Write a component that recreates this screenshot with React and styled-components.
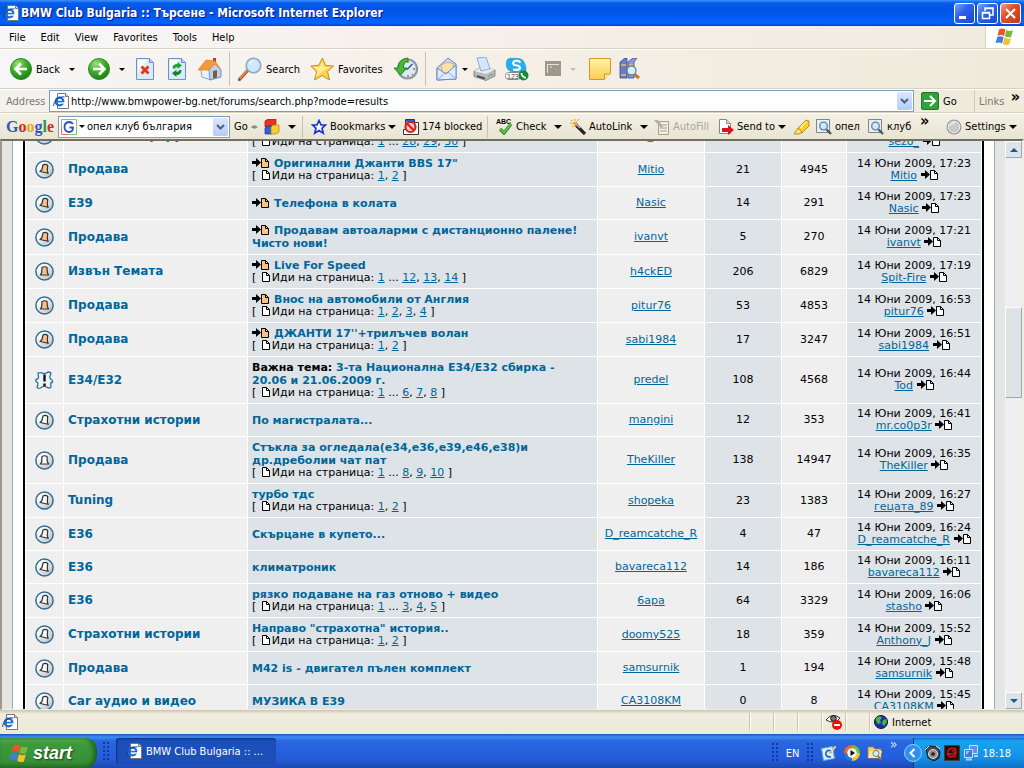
import React, { useLayoutEffect, useRef } from "react";
import styled, { createGlobalStyle } from "styled-components";

const topics = [
	{ icon: "new", forum: "Двигатели форум", title: "Нови снимки от събора", goto: true, pages: ["1", "28", "29", "30"], author: "sezo_bmw", replies: 442, views: 9120, date: "14 Юни 2009, 17:24", last: "sezo_" },
	{ icon: "new", forum: "Продава", title: 'Оригинални Джанти BBS 17"', goto: true, pages: ["1", "2"], author: "Mitio", replies: 21, views: 4945, date: "14 Юни 2009, 17:23", last: "Mitio" },
	{ icon: "new", forum: "E39", title: "Телефона в колата", goto: true, author: "Nasic", replies: 14, views: 291, date: "14 Юни 2009, 17:23", last: "Nasic" },
	{ icon: "new", forum: "Продава", title: "Продавам автоаларми с дистанционно палене! Чисто нови!", goto: true, author: "ivanvt", replies: 5, views: 270, date: "14 Юни 2009, 17:21", last: "ivanvt" },
	{ icon: "newHot", forum: "Извън Темата", title: "Live For Speed", goto: true, pages: ["1", "12", "13", "14"], author: "h4ckED", replies: 206, views: 6829, date: "14 Юни 2009, 17:19", last: "Spit-Fire" },
	{ icon: "newHot", forum: "Продава", title: "Внос на автомобили от Англия", goto: true, pages: ["1", "2", "3", "4"], author: "pitur76", replies: 53, views: 4853, date: "14 Юни 2009, 16:53", last: "pitur76" },
	{ icon: "new", forum: "Продава", title: "ДЖАНТИ 17''+трилъчев волан", goto: true, pages: ["1", "2"], author: "sabi1984", replies: 17, views: 3247, date: "14 Юни 2009, 16:51", last: "sabi1984" },
	{ icon: "sticky", forum: "E34/E32", sticky: true, title: "3-та Национална Е34/Е32 сбирка - 20.06 и 21.06.2009 г.", pages: ["1", "6", "7", "8"], author: "predel", replies: 108, views: 4568, date: "14 Юни 2009, 16:44", last: "Tod" },
	{ icon: "old", forum: "Страхотни истории", title: "По магистралата...", author: "mangini", replies: 12, views: 353, date: "14 Юни 2009, 16:41", last: "mr.co0p3r" },
	{ icon: "oldHot", forum: "Продава", title: "Стъкла за огледала(е34,е36,е39,е46,е38)и др.дреболии чат пат", pages: ["1", "8", "9", "10"], author: "TheKiller", replies: 138, views: 14947, date: "14 Юни 2009, 16:35", last: "TheKiller" },
	{ icon: "old", forum: "Tuning", title: "турбо тдс", pages: ["1", "2"], author: "shopeka", replies: 23, views: 1383, date: "14 Юни 2009, 16:27", last: "гецата_89" },
	{ icon: "old", forum: "E36", title: "Скърцане в купето...", author: "D_reamcatche_R", replies: 4, views: 47, date: "14 Юни 2009, 16:24", last: "D_reamcatche_R" },
	{ icon: "old", forum: "E36", title: "климатроник", author: "bavareca112", replies: 14, views: 186, date: "14 Юни 2009, 16:11", last: "bavareca112" },
	{ icon: "old", forum: "E36", title: "рязко подаване на газ отново + видео", pages: ["1", "3", "4", "5"], author: "6apa", replies: 64, views: 3329, date: "14 Юни 2009, 16:06", last: "stasho" },
	{ icon: "old", forum: "Страхотни истории", title: 'Направо "страхотна" история..', pages: ["1", "2"], author: "doomy525", replies: 18, views: 359, date: "14 Юни 2009, 15:52", last: "Anthony_J" },
	{ icon: "old", forum: "Продава", title: "М42 is - двигател пълен комплект", author: "samsurnik", replies: 1, views: 194, date: "14 Юни 2009, 15:48", last: "samsurnik" },
	{ icon: "old", forum: "Car аудио и видео", title: "МУЗИКА В Е39", author: "CA3108KM", replies: 0, views: 8, date: "14 Юни 2009, 15:45", last: "CA3108KM" },
];

/* ---------- icons ---------- */

const IeIcon = ({ size = 16 }) => (
	<svg width={size} height={size} viewBox="0 0 16 16">
		<path d="M4.5 .5h8l3 3v12h-11z" fill="#fff" stroke="#777" />
		<path d="M12.500 .5v3h3" fill="#ddd" stroke="#777" />
		<circle cx="6.500" cy="8.500" r="3.800" fill="none" stroke="#1c6fd0" strokeWidth="2.200" />
		<path d="M3.500 8.600h7" stroke="#1c6fd0" strokeWidth="1.600" />
		<path d="M8.500 10h3" stroke="#fff" strokeWidth="1.400" />
		<path d="M.8 13C-.5 9 7 2.500 11.500 4" fill="none" stroke="#123f8c" />
	</svg>
);

const Flag = ({ size = 20 }) => (
	<svg width={size} height={size} viewBox="0 0 20 20">
		<path d="M4 2.500q3-2 6.500 0L9 9Q6 7 2.500 8.800z" fill="#e8562a" />
		<path d="M11.300 3q3 1.800 6.700.3L16.200 9.700Q13 11 9.800 9.300z" fill="#7bb83a" />
		<path d="M2.200 10q3-1.800 6.500.2L7 16.500Q4 14.500.5 16.300z" fill="#3f7fdb" />
		<path d="M9.500 10.600q3 1.900 6.500.4L14.200 17.500Q11 19 7.800 17z" fill="#f6c12b" />
	</svg>
);

const RoundArrow = ({ flip }) => (
	<svg width="22" height="22" viewBox="0 0 22 22">
		<defs>
			<radialGradient id="grn" cx=".35" cy=".25" r=".8">
				<stop offset="0" stopColor="#9be07a" />
				<stop offset=".5" stopColor="#3fae2a" />
				<stop offset="1" stopColor="#1c7d14" />
			</radialGradient>
		</defs>
		<circle cx="11" cy="11" r="10.500" fill="url(#grn)" stroke="#2c8a22" />
		<path
			d={flip ? "M5 11h11M11 5.500l5.500 5.500-5.500 5.500" : "M17 11H6M11 5.500L5.500 11l5.500 5.500"}
			fill="none"
			stroke="#fff"
			strokeWidth="2.600"
		/>
	</svg>
);

const PageShape = () => (
	<>
		<path d="M.5.5h13l4 4v17H.5z" fill="#dcebfc" stroke="#6b92cf" />
		<path d="M2 2h9L2 14z" fill="#fff" />
		<path d="M13.500.5v4h4" fill="#b4d0f2" stroke="#6b92cf" />
	</>
);

const StopIcon = () => (
	<svg width="18" height="22" viewBox="0 0 18 22">
		<PageShape />
		<path d="M5.500 8.500l7 7M12.500 8.500l-7 7" stroke="#e63510" strokeWidth="2.800" />
	</svg>
);

const RefreshIcon = () => (
	<svg width="18" height="22" viewBox="0 0 18 22">
		<PageShape />
		<path d="M4.500 10q0-4 5-4v-2l4.500 3.500L9.500 11V9q-2.500 0-3 2z" fill="#23a03a" />
		<path d="M13.500 12q0 5-5 5v2L4 15.200l4.500-3.500v2.300q2.500 0 3-2z" fill="#158427" />
	</svg>
);

const HomeIcon = () => (
	<svg width="24" height="24" viewBox="0 0 24 24">
		<path d="M15 1h3v7h-3z" fill="#c33c20" />
		<path d="M3 13l7-8 3 8v10L4 20z" fill="#e9f1fc" stroke="#8aa4d0" />
		<path d="M11 13l6-7 6 7v7l-11 3z" fill="#bdd2f3" stroke="#6f8fc8" />
		<path d="M0 13L8 3l9 1 6 9-6-6-7 6z" fill="#f59a35" stroke="#d9822b" strokeWidth=".7" />
		<path d="M15 14l4-1v7.500l-4 1z" fill="#7c5a3c" />
	</svg>
);

const SearchIcon = () => (
	<svg width="24" height="24" viewBox="0 0 24 24">
		<path d="M1.500 22.500L10 13" stroke="#a5502a" strokeWidth="3.200" strokeLinecap="round" />
		<path d="M2 21.500L9 13.500" stroke="#e79a62" strokeWidth="1.200" />
		<circle cx="15.500" cy="8.500" r="7.300" fill="#cfe9fb" stroke="#8ea6cc" strokeWidth="1.600" />
		<path d="M10.500 8q1-4.500 5.500-4.500-3 1.500-5.500 4.500z" fill="#fff" />
	</svg>
);

const StarIcon = () => (
	<svg width="24" height="24" viewBox="0 0 24 24">
		<path d="M12.500 1l3 7.500 8 .5-6 5.500 2 8.500-7.500-4.500L4.500 23l2.200-8L.8 9l8-.8z" fill="#fcd545" stroke="#c98a1c" />
		<path d="M12.300 4l1.500 6H20l-7 4-7.500 6L8 14 3.500 10H9.500z" fill="#feec9a" />
	</svg>
);

const HistoryIcon = () => (
	<svg width="24" height="24" viewBox="0 0 24 24">
		<circle cx="13.500" cy="12" r="9.500" fill="#d8edf8" stroke="#8797a8" strokeWidth="2.200" />
		<path d="M13.500 12l5-5M14 12h-3" stroke="#2c5f93" strokeWidth="1.500" />
		<path d="M14 4v2M14 18v2M19 12h2M18 17l1 1" stroke="#d0502e" strokeWidth="1.400" />
		<path d="M14 1Q4 2 4 11H0l6.500 7 6.500-7H9.500Q9 6 14 4z" fill="#4cb53a" stroke="#25801c" />
	</svg>
);

const MailIcon = () => (
	<svg width="22" height="24" viewBox="0 0 22 24">
		<path d="M1 11L12 1l8 6v15L1 23z" fill="#c5dbf7" stroke="#6f87c8" />
		<path d="M5 9q5-6 13-2l-2 8-9 1z" fill="#fbe0a8" stroke="#d8a04c" strokeWidth=".8" />
		<path d="M1 11l9 6 10-9v14L1 23z" fill="#dcebfd" stroke="#6f87c8" />
		<path d="M1 23l8-7M20 22l-8-7" stroke="#8fa5da" />
	</svg>
);

const PrintIcon = () => (
	<svg width="24" height="24" viewBox="0 0 24 24">
		<path d="M1 14l8-4 13 3v6l-9 4.500-12-4z" fill="#b9b9bd" stroke="#77777c" strokeWidth=".8" />
		<path d="M1 14l8-4 13 2.500-9 4.500z" fill="#ececef" />
		<path d="M4 1l9-1 4 12-9 2z" fill="#d3e5fb" stroke="#7d9cd0" strokeWidth=".8" />
		<path d="M4 19l8 2.500" stroke="#3f3f45" strokeWidth="1.600" />
		<path d="M15 19.500l5-2.500" stroke="#6cb34a" strokeWidth="1.200" />
	</svg>
);

const SkypeIcon = () => (
	<svg width="24" height="24" viewBox="0 0 24 24">
		<path d="M1 6Q1 0 8 1q11-2 13 8 2 8-5 8L6 15Q0 12 1 6z" fill="#29aee8" />
		<path d="M15.500 5.500Q13 3 10 4T9 8q6 .5 6 3T8 12.500" fill="none" stroke="#fff" strokeWidth="2.200" />
		<rect x=".5" y="15.500" width="15" height="7" rx="3" fill="#fff" stroke="#888" />
		<text x="2" y="22" fontSize="7" fontFamily="Liberation Sans, sans-serif" fill="#444">123</text>
		<circle cx="18.500" cy="18.500" r="5" fill="#158a2e" />
		<path d="M16.500 16q0 4 4.500 4.800" fill="none" stroke="#fff" strokeWidth="1.800" />
	</svg>
);

const BlankAppIcon = () => (
	<svg width="16" height="16" viewBox="0 0 16 16">
		<path d="M0 0h16v16H0z" fill="#9c998c" />
		<path d="M2 3.500h12M2.500 3v9M6 5v2" stroke="#e9e5d6" />
		<path d="M0 15.500h16" stroke="#f8f6ee" />
	</svg>
);

const NoteIcon = () => (
	<svg width="22" height="22" viewBox="0 0 22 22">
		<defs>
			<linearGradient id="note" x2="0" y2="1">
				<stop offset="0" stopColor="#fff3a8" />
				<stop offset="1" stopColor="#fbcb55" />
			</linearGradient>
		</defs>
		<path d="M.5.5h21v15l-6 6H.5z" fill="url(#note)" stroke="#d09b22" />
		<path d="M15.500 21.500v-5.500h6" fill="#fde98f" stroke="#d09b22" />
	</svg>
);

const BooksIcon = () => (
	<svg width="22" height="22" viewBox="0 0 22 22">
		<path d="M1 4l5-4h2v20H1z" fill="#6c7bc8" stroke="#3c4a96" strokeWidth=".8" />
		<path d="M9 4l5-4h4l-3 4v16H9z" fill="#8a98de" stroke="#3c4a96" strokeWidth=".8" />
		<path d="M2 7h5M2 17h5M10 7h4" stroke="#e3c15e" strokeWidth="1.500" />
		<path d="M15 16l5 4" stroke="#bb7a30" strokeWidth="3" />
		<circle cx="12.500" cy="12.500" r="4.500" fill="#d3effb" stroke="#6a8499" strokeWidth="1.300" />
	</svg>
);

const GoIcon = () => (
	<svg width="18" height="18" viewBox="0 0 18 18">
		<rect x=".5" y=".5" width="17" height="17" rx="1.500" fill="#33a03b" stroke="#1e7a2a" />
		<path d="M3 9h11M9 4l5 5-5 5" fill="none" stroke="#fff" strokeWidth="2" />
	</svg>
);

const GIcon = () => (
	<svg width="16" height="16" viewBox="0 0 16 16">
		<path d="M.5 8V.5h15" fill="none" stroke="#8aa7f0" />
		<path d="M.5 8v7.500H8" fill="none" stroke="#e86a5c" />
		<path d="M15.500.5v7" fill="none" stroke="#7cc47e" />
		<path d="M15.500 8v7.500H8" fill="none" stroke="#7cc47e" />
		<path d="M12 5Q10.500 3 8 3 3.500 3.500 3.500 8T8 13q4 0 4-4.500H8.500" fill="none" stroke="#2b50c0" strokeWidth="1.800" />
	</svg>
);

const GadgetIcon = () => (
	<svg width="16" height="16" viewBox="0 0 16 16">
		<path d="M1 2l3-2h8v5l-3 3H1z" fill="#e8311f" stroke="#8e1a10" strokeWidth=".7" />
		<path d="M1 9l3-2h4v8H1z" fill="#2f62d8" stroke="#173a8e" strokeWidth=".7" />
		<path d="M7 8l2-2h6v7l-3 2H7z" fill="#f7cf2b" stroke="#a8830f" strokeWidth=".7" />
	</svg>
);

const BlueStar = () => (
	<svg width="16" height="16" viewBox="0 0 16 16">
		<path d="M8 1.500l2 4.500h4.500L11 9.200l1.300 5L8 11.500l-4.300 2.700 1.300-5L1.500 6H6z" fill="#fff" stroke="#1633e0" strokeWidth="1.700" />
	</svg>
);

const BlockedIcon = () => (
	<svg width="16" height="16" viewBox="0 0 16 16">
		<path d="M2.500.5h9v3h4v12h-15v-5h2z" fill="#fff" stroke="#333" />
		<path d="M3 1h8v2H3z" fill="#2f62d8" />
		<circle cx="7.500" cy="8" r="5" fill="#f6d0cc" stroke="#dc1f1a" strokeWidth="2.200" />
		<path d="M4 4.500l7 7" stroke="#dc1f1a" strokeWidth="2.200" />
	</svg>
);

const SpellIcon = () => (
	<svg width="17" height="16" viewBox="0 0 17 16">
		<text x="0" y="5" fontSize="7" fontWeight="bold" fontFamily="Liberation Sans, sans-serif">ABC</text>
		<path d="M4 10l4 4 7-9" fill="none" stroke="#2b8c22" strokeWidth="3.200" />
		<path d="M4 9.700l4 4 7-9" fill="none" stroke="#7fd45c" strokeWidth="1.200" />
	</svg>
);

const WandIcon = () => (
	<svg width="16" height="16" viewBox="0 0 16 16">
		<path d="M6 6l9 9" stroke="#222" strokeWidth="3.200" />
		<path d="M6 5l4 4" stroke="#bbb" strokeWidth="1.500" />
		<path d="M5 0v8M0 4.500h9M1 1l6 6M9 0L2 8" stroke="#e3a622" strokeWidth="1.100" strokeDasharray="2 1" />
	</svg>
);

const FillIcon = () => (
	<svg width="16" height="16" viewBox="0 0 16 16">
		<path d="M4.500 2.500h10v13h-10z" fill="#f1eee2" stroke="#a5a294" />
		<path d="M6 6h7M6 9h7M6 12h7" stroke="#a5a294" />
		<path d="M0 1h4l5 6-1 2-2-1z" fill="#b5b2a5" />
	</svg>
);

const SendIcon = () => (
	<svg width="16" height="16" viewBox="0 0 16 16">
		<path d="M1.500.5h7l4 4v10h-11z" fill="#fff" stroke="#888" />
		<path d="M8.500.5v4h4" fill="#ddd" stroke="#888" />
		<path d="M4 9h6V6l6 5-6 5v-3H4z" fill="#dd1320" />
	</svg>
);

const PenIcon = () => (
	<svg width="16" height="16" viewBox="0 0 16 16">
		<path d="M5 8l7-7 3 1v5l-7 7-5-1z" fill="#f9cf2c" stroke="#a97c10" strokeWidth=".8" />
		<path d="M4 9l4 4-3 2H0z" fill="#fbe56f" stroke="#a97c10" strokeWidth=".8" />
		<path d="M11 3l2-1-6 8-1-2z" fill="#fff3a0" />
	</svg>
);

const FindIcon = () => (
	<svg width="16" height="16" viewBox="0 0 16 16">
		<path d="M.5.500h13v13H.5z" fill="#e9eef4" stroke="#7b8794" />
		<path d="M10.500 10.500l4.500 4.500" stroke="#555" strokeWidth="2.400" />
		<circle cx="7.500" cy="7" r="3.800" fill="#cdeaf8" stroke="#5f7fa0" strokeWidth="1.300" />
	</svg>
);

const OrbIcon = () => (
	<svg width="16" height="16" viewBox="0 0 16 16">
		<circle cx="8" cy="8" r="7.500" fill="#9b9b9b" />
		<circle cx="8" cy="8" r="5.800" fill="#c9c9c9" stroke="#eee" />
		<path d="M4 7q1-3 5-3.500" fill="none" stroke="#fff" />
	</svg>
);

const EyeIcon = () => (
	<svg width="16" height="16" viewBox="0 0 16 16">
		<path d="M0 6Q6-2 14 4 9 11 0 6z" fill="#fff" stroke="#333" />
		<circle cx="7.500" cy="4.500" r="2.800" fill="#777" stroke="#111" />
		<circle cx="11" cy="11" r="5" fill="#ee1010" />
		<path d="M8 11h6" stroke="#fff" strokeWidth="2" />
	</svg>
);

const GlobeIcon = () => (
	<svg width="14" height="14" viewBox="0 0 14 14">
		<circle cx="7" cy="7" r="6.500" fill="#1b2fae" stroke="#0b1240" />
		<path d="M2 3l4-2 2 2-2 2 1 3-3 1-2-3zM9 5l3-1 1 3-3 4-2-2z" fill="#46b83e" />
	</svg>
);

const DeskIcon = () => (
	<svg width="16" height="16" viewBox="0 0 16 16">
		<path d="M.5 3.500l11-2 2 12-11 2z" fill="#d9eefb" stroke="#6ba6d6" />
		<path d="M10 6Q6 4 5 8t5 4M8 8l3-1" fill="none" stroke="#1e66c8" strokeWidth="1.700" />
		<path d="M14 1l1 1-6 7-2 1 1-2z" fill="#f2b74a" stroke="#fff" strokeWidth=".5" />
	</svg>
);

const MediaIcon = () => (
	<svg width="16" height="16" viewBox="0 0 16 16">
		<path d="M8 0a8 8 0 0 1 8 8h-8z" fill="#6cbf3a" />
		<path d="M16 8a8 8 0 0 1-8 8V8z" fill="#f3c128" />
		<path d="M8 16a8 8 0 0 1-8-8h8z" fill="#2c72d8" />
		<path d="M0 8a8 8 0 0 1 8-8v8z" fill="#ec6a24" />
		<circle cx="8" cy="8" r="4.800" fill="#f4f7fb" />
		<path d="M6.500 5l4.500 3-4.500 3z" fill="#111" />
	</svg>
);

const FolderIcon = () => (
	<svg width="16" height="16" viewBox="0 0 16 16">
		<path d="M1 2h5l2 2h6v9H1z" fill="#f6cf62" stroke="#b88420" strokeWidth=".7" />
		<path d="M3 6h12l-2 7H1z" fill="#fde89c" />
		<circle cx="9" cy="8.500" r="3" fill="#d4f0fa" stroke="#64809a" />
		<path d="M11 11l3 4" stroke="#a8692a" strokeWidth="1.800" />
	</svg>
);

const SpeakerIcon = () => (
	<svg width="16" height="16" viewBox="0 0 16 16">
		<path d="M1 3l4-2 7 1 3 5-1 6-5 3-6-3z" fill="#4a4a4c" stroke="#17171a" />
		<circle cx="8" cy="9" r="4.500" fill="#8f8f92" stroke="#ddd" />
		<circle cx="8" cy="9" r="1.800" fill="#1c1c1e" />
		<path d="M0 5l4-4M11 1l4 3" stroke="#e4e4e4" />
	</svg>
);

const RedBoxIcon = () => (
	<svg width="16" height="16" viewBox="0 0 16 16">
		<path d="M.5.500h15v15H.5z" fill="#20100f" stroke="#3c3c3c" />
		<path d="M12 4Q6 2 4 6t5 3l3-2-1 4-5 1M3 9l3 3M8 6l4-1" fill="none" stroke="#c41d18" strokeWidth="1.500" />
	</svg>
);

const NetIcon = () => (
	<svg width="16" height="16" viewBox="0 0 16 16">
		<path d="M6.500.5h8v8h-8z" fill="#5a92e4" stroke="#d4dce8" />
		<path d="M1.500 4.500h8v8h-8z" fill="#3c78d8" stroke="#d4dce8" />
		<path d="M3 14.500h6M11 11h4" stroke="#c4ccd8" strokeWidth="2" />
		<path d="M3 6h4l-4 4z" fill="#9cc4f6" />
	</svg>
);

const TopicIcon = ({ kind }) => {
	if (kind === "sticky") {
		return (
			<svg width="19" height="19" viewBox="0 0 19 19">
				<path
					d="M3 2q3-1 5 .5Q11 3 13 1q3 0 3 2-2 3-.5 5 2.500 1 2 3-2 .5-2 2.500 1.500 3-1 3.500-2 0-4-1.500-3-.5-5 1.500-3 1-3.500-1 1.500-3 .5-4.500Q0 10 1 8.500q2.500-.5 2.500-2T3 2z"
					fill="#eef3f7"
					stroke="#2b6f98"
					strokeWidth="1.300"
				/>
				<path d="M9.500 3.500v7M9.500 12.500v2.500" stroke="#111" strokeWidth="2.400" />
			</svg>
		);
	}
	const isNew = kind.startsWith("new");
	const hot = kind.endsWith("Hot");
	return (
		<svg width="19" height="19" viewBox="0 0 19 19">
			<defs>
				<linearGradient id="disc" x2="1" y2="1">
					<stop offset=".2" stopColor="#fff" />
					<stop offset="1" stopColor="#b4b8bc" />
				</linearGradient>
			</defs>
			<circle cx="9.500" cy="9.500" r="8.600" fill="url(#disc)" stroke="#2b6f98" strokeWidth="1.500" />
			<path
				d={hot ? "M7 5.500Q9.500 4 12 5.500l.3 5 1.200 2.500h-8l1.200-2.500z" : "M8 5q2.500-1.500 4.700.5l-.4 5 .7 2.800-7.800-1.800L7 9.500z"}
				fill={isNew ? "#fbc288" : "#fafafa"}
				stroke="#333"
				strokeWidth="1.200"
			/>
		</svg>
	);
};

const MiniPage = ({ arrow, color = "#fff" }) => (
	<MiniSvg width={arrow ? 17 : 8} height="10" viewBox={arrow ? "0 0 17 10" : "9 0 8 10"}>
		{arrow && <path d="M0 3h4V0l5 4.500L4 9V6H0z" fill="#000" />}
		<path d="M9.500.5h4l3 3v6h-7z" fill={color} stroke="#000" />
		<path d="M13.500.5v3h3" fill="none" stroke="#000" />
	</MiniSvg>
);

/* ---------- window ---------- */

const App = () => {
	const view = useRef(null);
	useLayoutEffect(() => {
		view.current.scrollTop = 23;
	}, []);

	return (
		<Desktop>
			<GlobalStyle />
			<TitleBar>
				<IeIcon />
				<WindowTitle>BMW Club Bulgaria :: Търсене - Microsoft Internet Explorer</WindowTitle>
				<WindowButton aria-label="Minimize">
					<svg width="19" height="19" viewBox="0 0 19 19"><path d="M4 13.500h7" stroke="#fff" strokeWidth="3" /></svg>
				</WindowButton>
				<WindowButton aria-label="Restore">
					<svg width="19" height="19" viewBox="0 0 19 19">
						<path d="M7 7V4h8v7h-3M7 4.500h8" fill="none" stroke="#fff" strokeWidth="1.500" />
						<path d="M4.500 8.500h7v6h-7zM4 9h8" fill="none" stroke="#fff" strokeWidth="1.500" />
					</svg>
				</WindowButton>
				<WindowButton $close aria-label="Close">
					<svg width="19" height="19" viewBox="0 0 19 19"><path d="M5 5l9 9M14 5l-9 9" stroke="#fff" strokeWidth="2.200" /></svg>
				</WindowButton>
			</TitleBar>

			<MenuBar>
				<MenuItem>File</MenuItem>
				<MenuItem>Edit</MenuItem>
				<MenuItem>View</MenuItem>
				<MenuItem>Favorites</MenuItem>
				<MenuItem>Tools</MenuItem>
				<MenuItem>Help</MenuItem>
				<Throbber><Flag /></Throbber>
			</MenuBar>

			<ToolBar>
				<ToolButton $w={78}><RoundArrow />Back<Caret $push /></ToolButton>
				<ToolButton $w={48} aria-label="Forward"><RoundArrow flip /><Caret $push /></ToolButton>
				<ToolButton $w={32} aria-label="Stop"><StopIcon /></ToolButton>
				<ToolButton $w={30} aria-label="Refresh"><RefreshIcon /></ToolButton>
				<ToolButton $w={31} aria-label="Home"><HomeIcon /></ToolButton>
				<Divider />
				<ToolButton $w={72}><SearchIcon />Search</ToolButton>
				<ToolButton $w={84}><StarIcon />Favorites</ToolButton>
				<ToolButton $w={31} aria-label="History"><HistoryIcon /></ToolButton>
				<Divider $wide />
				<ToolButton $w={37} aria-label="Mail"><MailIcon /><Caret /></ToolButton>
				<ToolButton $w={32} aria-label="Print"><PrintIcon /></ToolButton>
				<ToolButton $w={40} aria-label="Skype"><SkypeIcon /></ToolButton>
				<ToolButton $w={44} aria-label="Research"><BlankAppIcon /><Caret $push $dim /></ToolButton>
				<ToolButton $w={30} aria-label="Note"><NoteIcon /></ToolButton>
				<ToolButton $w={30} aria-label="Reference"><BooksIcon /></ToolButton>
			</ToolBar>

			<AddressBar>
				<BarLabel htmlFor="address">Address</BarLabel>
				<AddressBox>
					<IeIcon />
					<BoxInput id="address" defaultValue="http://www.bmwpower-bg.net/forums/search.php?mode=results" />
					<DropButton aria-label="Show addresses"><Chevron /></DropButton>
				</AddressBox>
				<GoButton><GoIcon />Go</GoButton>
				<LinksPart>Links<More>»</More></LinksPart>
			</AddressBar>

			<GoogleBar>
				<GoogleLogo href="#google">
					<i>G</i><i>o</i><i>o</i><i>g</i><i>l</i><i>e</i>
				</GoogleLogo>
				<QueryBox>
					<GIcon />
					<Caret />
					<BoxInput aria-label="Google search" defaultValue="опел клуб българия" />
					<DropButton aria-label="Recent searches"><Chevron /></DropButton>
				</QueryBox>
				<BarButton $w={34}>Go<Splitter>◂▸</Splitter></BarButton>
				<BarButton $w={38} aria-label="Gadgets"><GadgetIcon /><Caret $big $push /></BarButton>
				<Divider $short />
				<BarButton $w={92}><BlueStar />Bookmarks<Caret $big /></BarButton>
				<BarButton $w={84}><BlockedIcon />174 blocked</BarButton>
				<Divider $short />
				<BarButton $w={74}><SpellIcon />Check<Caret $big $push /></BarButton>
				<BarButton $w={84}><WandIcon />AutoLink<Caret $big $push /></BarButton>
				<BarButton $w={64} $dim><FillIcon />AutoFill</BarButton>
				<BarButton $w={76}><SendIcon />Send to<Caret $big /></BarButton>
				<BarButton $w={22} aria-label="Highlight"><PenIcon /></BarButton>
				<BarButton $w={52}><FindIcon />опел</BarButton>
				<BarButton $w={52}><FindIcon />клуб</BarButton>
				<More>»</More>
				<BarButton $w={74} $end><OrbIcon />Settings<Caret $big /></BarButton>
			</GoogleBar>

			<Viewport>
				<Page ref={view}>
					<Sheet>
						<TopicTable>
							<colgroup>
								<col width="37" />
								<col width="183" />
								<col />
								<col width="106" />
								<col width="76" />
								<col width="64" />
								<col width="134" />
							</colgroup>
							<tbody>
								{topics.map((t, i) => (
									<tr key={i}>
										<Cell $center><TopicIcon kind={t.icon} /></Cell>
										<Cell><ForumLink href="#forum">{t.forum}</ForumLink></Cell>
										<Cell $dark>
											<TopicTitle>
												{t.goto && <a href="#new" aria-label="Newest post"><MiniPage arrow color="#fbc288" /></a>}
												{t.sticky && "Важна тема: "}
												<a href="#topic">{t.title}</a>
											</TopicTitle>
											{t.pages && <Pages pages={t.pages} />}
										</Cell>
										<Cell $center><Author href="#user">{t.author}</Author></Cell>
										<Cell $center $dark><Small>{t.replies}</Small></Cell>
										<Cell $center><Small>{t.views}</Small></Cell>
										<Cell $center $dark>
											<Small>{t.date}</Small>
											<Small>
												<a href="#user">{t.last}</a> <MiniPage arrow />
											</Small>
										</Cell>
									</tr>
								))}
							</tbody>
						</TopicTable>
					</Sheet>
				</Page>
				<ScrollTrack>
					<ScrollButton aria-label="Scroll up"><Tri $up /></ScrollButton>
					<Above />
					<Thumb />
					<Below />
					<ScrollButton aria-label="Scroll down"><Tri /></ScrollButton>
				</ScrollTrack>
			</Viewport>

			<StatusBar>
				<StatusMain><IeIcon /></StatusMain>
				<StatusPart />
				<StatusPart />
				<StatusPart />
				<StatusPart><EyeIcon /></StatusPart>
				<StatusPart />
				<StatusPart $wide><GlobeIcon />Internet</StatusPart>
			</StatusBar>

			<TaskBar>
				<StartButton><Flag size={21} />start</StartButton>
				<Grip />
				<TaskButton><IeIcon />BMW Club Bulgaria :: ...</TaskButton>
				<Quick>
					<Grip />
					<Lang>EN</Lang>
					<Grip />
					<DeskIcon />
					<MediaIcon />
					<FolderIcon />
					<Overflow>»</Overflow>
				</Quick>
				<Tray>
					<TrayToggle aria-label="Hide icons">
						<svg width="18" height="18" viewBox="0 0 18 18">
							<circle cx="9" cy="9" r="8.500" fill="#2f8fee" stroke="#8fd0ff" />
							<path d="M10.500 5L6.500 9l4 4" fill="none" stroke="#fff" strokeWidth="2" />
						</svg>
					</TrayToggle>
					<SpeakerIcon />
					<RedBoxIcon />
					<NetIcon />
					<Clock>18:18</Clock>
				</Tray>
			</TaskBar>
		</Desktop>
	);
};

const Pages = ({ pages }) => (
	<PageLine>
		[ <MiniPage />Иди на страница:{" "}
		{pages.map((p, i) => {
			const skip = i === 1 && p !== "2";
			return (
				<React.Fragment key={p}>
					{i > 0 && (skip ? " ... " : ", ")}
					<a href="#page">{p}</a>
				</React.Fragment>
			);
		})}
		{" ]"}
	</PageLine>
);

const Chevron = () => (
	<svg width="9" height="6" viewBox="0 0 9 6"><path d="M1 1l3.500 3.500L8 1" fill="none" stroke="#4d6185" strokeWidth="2" /></svg>
);

export default App;

/* ---------- styles ---------- */

const GlobalStyle = createGlobalStyle`
	* { box-sizing: border-box; }
	body {
		margin: 0;
		font-family: "DejaVu Sans Condensed", "DejaVu Sans", sans-serif;
		font-size: 11px;
		color: #000;
	}
	button, input { font: inherit; color: inherit; }
	button { border: 0; background: none; padding: 0; white-space: nowrap; }
	svg { flex: none; }
`;

const Desktop = styled.div`
	height: 100vh;
	display: flex;
	flex-direction: column;
	overflow: hidden;
	background: #ece9d8;
`;

const TitleBar = styled.header`
	flex: none;
	height: 26px;
	display: flex;
	align-items: center;
	gap: 2px;
	padding: 0 3px;
	background: linear-gradient(#3a93ff 0, #0a5bea 3px, #0054e3 10px, #0060fb 20px, #0062ff 23px, #0044c4 26px);
`;

const WindowTitle = styled.h1`
	flex: 1;
	margin: 0;
	font-size: 12px;
	font-weight: bold;
	color: #fff;
	text-shadow: 1px 1px 1px #0f1089;
`;

const WindowButton = styled.button`
	width: 21px;
	height: 21px;
	border: 1px solid #fff;
	border-radius: 3px;
	background: ${(p) =>
		p.$close ? "linear-gradient(135deg, #f0a088, #e2502b 40%, #c23a14)" : "linear-gradient(135deg, #7fa4f5, #2f62ea 40%, #1b47d0)"};
	svg { display: block; }
`;

const MenuBar = styled.nav`
	flex: none;
	height: 23px;
	display: flex;
	align-items: center;
	gap: 15px;
	padding-left: 9px;
	background: linear-gradient(90deg, #f7f7f8, #f6efe9 50%, #efecdf);
	border-bottom: 1px solid #d8d2bd;
`;

const MenuItem = styled.button``;

const Throbber = styled.div`
	margin-left: auto;
	width: 39px;
	height: 22px;
	display: flex;
	align-items: center;
	justify-content: center;
	background: #fff;
	border-left: 1px solid #d8d2bd;
`;

const ToolBar = styled.div`
	flex: none;
	height: 40px;
	display: flex;
	align-items: center;
	padding-left: 10px;
	background: linear-gradient(90deg, #f7f6f6, #f5efe6 50%, #efebdb);
	border-top: 1px solid #fff;
	border-bottom: 1px solid #d8d2bd;
`;

const ToolButton = styled.button`
	flex: none;
	width: ${(p) => p.$w}px;
	display: flex;
	align-items: center;
	gap: 4px;
`;

const Caret = styled.span`
	flex: none;
	border: ${(p) => (p.$big ? 4 : 3)}px solid transparent;
	border-top-color: ${(p) => (p.$dim ? "#c4c0b0" : "#000")};
	border-bottom: 0;
	margin-left: ${(p) => (p.$push ? 5 : 0)}px;
`;

const Divider = styled.span`
	flex: none;
	width: 1px;
	height: ${(p) => (p.$short ? 22 : 34)}px;
	margin-right: ${(p) => (p.$wide ? 10 : 8)}px;
	background: #c9c3ab;
`;

const AddressBar = styled.div`
	flex: none;
	height: 24px;
	display: flex;
	align-items: center;
	padding-left: 6px;
	background: linear-gradient(90deg, #f4f2ee, #efebdb);
	border-top: 1px solid #fff;
	border-bottom: 1px solid #d8d2bd;
`;

const BarLabel = styled.label`
	width: 43px;
	color: #7a786c;
`;

const AddressBox = styled.div`
	flex: 1;
	min-width: 0;
	height: 22px;
	display: flex;
	align-items: center;
	gap: 2px;
	padding: 0 1px 0 3px;
	background: #fff;
	border: 1px solid #7f9db9;
`;

const BoxInput = styled.input`
	flex: 1;
	min-width: 0;
	padding: 0;
	border: 0;
	outline: 0;
	background: transparent;
`;

const DropButton = styled.button`
	flex: none;
	width: 15px;
	height: 18px;
	display: flex;
	align-items: center;
	justify-content: center;
	border-radius: 2px;
	background: linear-gradient(#dbe6fd, #b5cbf8);
`;

const GoButton = styled.button`
	width: 60px;
	display: flex;
	align-items: center;
	gap: 4px;
	padding-left: 7px;
`;

const LinksPart = styled.div`
	width: 50px;
	height: 22px;
	display: flex;
	align-items: center;
	justify-content: space-between;
	padding: 0 4px;
	border-left: 1px solid #d0cab4;
	color: #7a786c;
`;

const More = styled.span`
	align-self: flex-start;
	font-size: 16px;
	line-height: 14px;
	font-weight: bold;
	color: #000;
`;

const GoogleBar = styled.div`
	flex: none;
	height: 26px;
	display: flex;
	align-items: center;
	padding: 0 4px 0 6px;
	background: linear-gradient(#f3f0e5, #e9e5d3);
	border-top: 1px solid #fff;
`;

const GoogleLogo = styled.a`
	width: 52px;
	font-family: "Liberation Serif", serif;
	font-size: 16px;
	font-weight: bold;
	text-decoration: none;
	i { font-style: normal; color: #2a56c8; }
	i:nth-child(2), i:nth-child(6) { color: #d32b1e; }
	i:nth-child(3) { color: #e3a912; }
	i:nth-child(5) { color: #2c9a3b; }
`;

const QueryBox = styled(AddressBox)`
	flex: 0 0 172px;
	padding-left: 2px;
`;

const BarButton = styled.button`
	flex: none;
	width: ${(p) => p.$w}px;
	display: flex;
	align-items: center;
	gap: 3px;
	margin-left: ${(p) => (p.$end ? "auto" : 0)};
	color: ${(p) => (p.$dim ? "#aca899" : "#000")};
	&:nth-of-type(1) { padding-left: 4px; }
`;

const Splitter = styled.span`
	font-size: 8px;
	color: #8a8779;
`;

const Viewport = styled.main`
	flex: 1;
	min-height: 0;
	display: flex;
	border-top: 2px solid #716f64;
	border-left: 2px solid #9d9a8b;
	border-right: 2px solid #f1efe2;
	border-bottom: 1px solid #f1efe2;
	background: #e5e5e5;
`;

const Page = styled.div`
	flex: 1;
	min-width: 0;
	overflow: hidden;
	padding: 0 10px;
	font-family: "DejaVu Sans", Verdana, sans-serif;
	a { color: #006699; }
`;

const Sheet = styled.div`
	padding: 0 10px;
	background: #fff;
	border: 1px solid #98aab1;
	border-width: 0 1px;
`;

const TopicTable = styled.table`
	width: 100%;
	table-layout: fixed;
	border-collapse: separate;
	border-spacing: 1px;
	border: 2px solid #000;
	border-width: 0 2px;
`;

const Cell = styled.td`
	padding: 4px;
	background: ${(p) => (p.$dark ? "#dee3e7" : "#efefef")};
	text-align: ${(p) => (p.$center ? "center" : "left")};
	vertical-align: middle;
	line-height: 12px;
	> svg { display: block; margin: 0 auto; }
`;

const ForumLink = styled.a`
	font-size: 12px;
	font-weight: bold;
	text-decoration: none;
`;

const TopicTitle = styled.div`
	font-size: 11px;
	line-height: 13px;
	font-weight: bold;
	a { text-decoration: none; }
	svg { margin-right: 5px; }
`;

const Small = styled.div`
	font-size: 11px;
	line-height: 12px;
	white-space: nowrap;
`;

const PageLine = styled(Small)`
	svg { margin: 0 2px; }
`;

const Author = styled.a`
	font-size: 11px;
`;

const MiniSvg = styled.svg`
	vertical-align: -1px;
`;

const ScrollTrack = styled.div`
	flex: none;
	width: 17px;
	display: flex;
	flex-direction: column;
	background: #efefef;
`;

const ScrollButton = styled.button`
	height: 17px;
	display: flex;
	align-items: center;
	justify-content: center;
	background: #dee3e7;
	border: 1px solid #fff;
	border-right-color: #98aab1;
	border-bottom-color: #98aab1;
`;

const Tri = styled.span`
	border: 4px solid transparent;
	${(p) => (p.$up ? "border-top: 0; border-bottom-color: #006699;" : "border-bottom: 0; border-top-color: #006699;")}
`;

const Above = styled.div`
	flex: 150;
`;

const Thumb = styled.div`
	flex: 89;
	background: #dee3e7;
	border: 1px solid #fff;
	border-right-color: #98aab1;
	border-bottom-color: #98aab1;
`;

const Below = styled.div`
	flex: 295;
`;

const StatusBar = styled.footer`
	flex: none;
	height: 24px;
	display: flex;
	align-items: center;
	background: linear-gradient(#c9c5b4, #f1eee0 4px, #ece9d8);
`;

const StatusMain = styled.div`
	flex: 1;
	padding-left: 2px;
	svg { display: block; }
`;

const StatusPart = styled.div`
	flex: none;
	width: ${(p) => (p.$wide ? 155 : 24)}px;
	height: 18px;
	display: flex;
	align-items: center;
	gap: 4px;
	padding-left: 4px;
	border-left: 1px solid #c9c5b4;
	box-shadow: inset 1px 0 #fff;
`;

const TaskBar = styled.div`
	flex: none;
	height: 34px;
	display: flex;
	align-items: stretch;
	padding-top: 4px;
	background: linear-gradient(#1f51c0, #3f8cf3 3px, #2a66de 7px, #245edc 24px, #1d49b0 34px);
	color: #fff;
`;

const StartButton = styled.button`
	width: 97px;
	display: flex;
	align-items: center;
	gap: 3px;
	padding-left: 9px;
	border-radius: 0 12px 12px 0;
	background: linear-gradient(#62b962, #3c9a3c 6px, #378f37 24px, #2a7529);
	box-shadow: inset -3px 0 5px #1d5c1d;
	font-family: "Liberation Sans", sans-serif;
	font-size: 18px;
	font-style: italic;
	font-weight: bold;
	text-shadow: 1px 1px 2px #1a3d12;
`;

const Grip = styled.span`
	flex: none;
	width: 7px;
	height: 20px;
	margin: 4px 6px;
	background: radial-gradient(circle at 1px 1px, #1237a0 1px, transparent 1px) 0 0 / 4px 4px;
`;

const TaskButton = styled.button`
	width: 160px;
	height: 26px;
	display: flex;
	align-items: center;
	gap: 4px;
	padding-left: 10px;
	border-radius: 3px;
	background: #1d4fb8;
	box-shadow: inset 1px 1px 2px #0d2f7e;
`;

const Quick = styled.div`
	margin-left: auto;
	display: flex;
	align-items: center;
	gap: 7px;
	span { margin-left: 0; margin-right: 0; }
`;

const Lang = styled.span`
	width: 14px;
`;

const Overflow = styled.span`
	align-self: flex-start;
	font-size: 14px;
	line-height: 12px;
	color: #cfe2ff;
`;

const Tray = styled.div`
	display: flex;
	align-items: center;
	gap: 3px;
	margin-left: 16px;
	padding-right: 13px;
	background: linear-gradient(#0c73c8, #18a4f0 3px, #1290e8 20px, #0e6fc4);
	border-left: 1px solid #083d80;
`;

const TrayToggle = styled.button`
	margin-left: -10px;
	svg { display: block; }
`;

const Clock = styled.time``;
